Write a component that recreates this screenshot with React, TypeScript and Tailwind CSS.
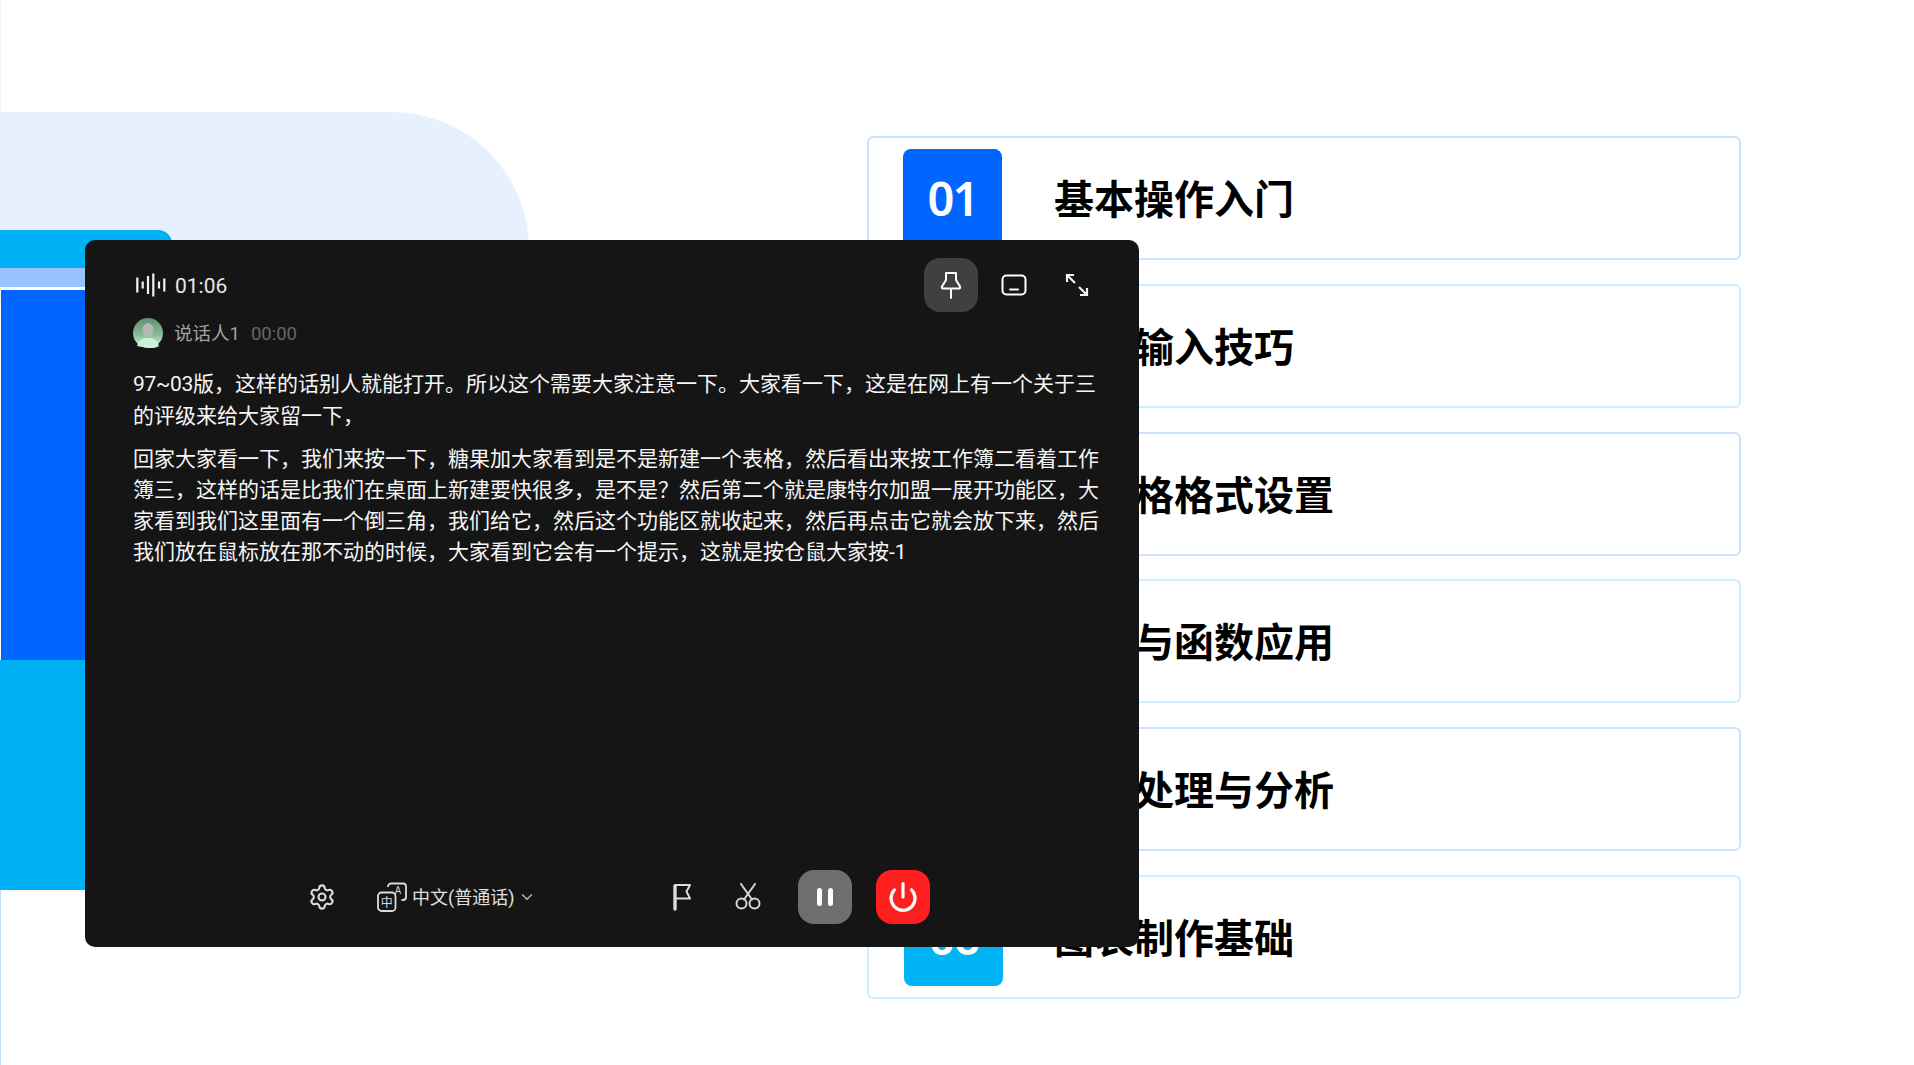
import { Settings, Power, ChevronDown } from "lucide-react";

const cards = [
  { n: "01", t: "基本操作入门", cyan: false },
  { n: "02", t: "数据输入技巧", cyan: true },
  { n: "03", t: "单元格格式设置", cyan: false },
  { n: "04", t: "公式与函数应用", cyan: true },
  { n: "05", t: "数据处理与分析", cyan: false },
  { n: "06", t: "图表制作基础", cyan: true },
];

const para2 = [
  "回家大家看一下，我们来按一下，糖果加大家看到是不是新建一个表格，然后看出来按工作簿二看着工作",
  "簿三，这样的话是比我们在桌面上新建要快很多，是不是？然后第二个就是康特尔加盟一展开功能区，大",
  "家看到我们这里面有一个倒三角，我们给它，然后这个功能区就收起来，然后再点击它就会放下来，然后",
  "我们放在鼠标放在那不动的时候，大家看到它会有一个提示，这就是按仓鼠大家按-1",
];

function Wave() {
  return (
    <svg width="32" height="24" viewBox="0 0 32 24" fill="none" stroke="#f2f2f2" strokeWidth="2.2">
      <path d="M2.3 4.5v15M7.7 8.5v7M13 3v18M18.3 .5v23M24 8.5v7M29.3 5.5v13" />
    </svg>
  );
}

function Pin() {
  return (
    <svg width="22" height="28" viewBox="0 0 22 28" fill="none" stroke="#fff" strokeWidth="2" strokeLinejoin="round" strokeLinecap="round">
      <path d="M6 2h10v7l4 6.5q.6 2-1 2H3q-1.6 0-1-2L6 9z" />
      <path d="M11 18v9" />
    </svg>
  );
}

function MiniWindow() {
  return (
    <svg width="26" height="22" viewBox="0 0 26 22" fill="none" stroke="#fff" strokeWidth="2" strokeLinecap="round">
      <rect x="1.5" y="1.5" width="23" height="19" rx="4" />
      <path d="M9 15.5h8" />
    </svg>
  );
}

function Expand() {
  return (
    <svg width="24" height="24" viewBox="0 0 24 24" fill="none" stroke="#f2f2f2" strokeWidth="2.2">
      <path d="M2 9V2h7M2 2l8 8M22 15v7h-7M22 22l-8-8" />
    </svg>
  );
}

function TranslateIcon() {
  return (
    <svg width="30" height="30" viewBox="0 0 30 30" fill="none" stroke="#dcdcdc" strokeWidth="1.8">
      <path d="M11 5q0-3.5 3.5-3.5H26q3 0 3 3V15q0 3-3 3h-1.5" />
      <rect x="1" y="10.5" width="17.5" height="18.5" rx="3.5" fill="#151515" />
      <text x="9.7" y="24.5" fontSize="12" textAnchor="middle" fill="#dcdcdc" stroke="none" fontFamily="'Noto Sans CJK SC', sans-serif">中</text>
      <text x="21" y="12" fontSize="10" textAnchor="middle" fill="#dcdcdc" stroke="none" fontFamily="Roboto, sans-serif">A</text>
    </svg>
  );
}

function Flag() {
  return (
    <svg width="20" height="28" viewBox="0 0 20 28" fill="none" stroke="#dcdcdc" strokeLinecap="round" strokeLinejoin="round">
      <path d="M3 3v23" strokeWidth="3.4" />
      <path d="M3 2h15l-3.5 6.5 3.5 7H3" strokeWidth="2" />
    </svg>
  );
}

function Scissors() {
  return (
    <svg width="26" height="28" viewBox="0 0 26 28" fill="none" stroke="#d6d6d6" strokeWidth="2" strokeLinecap="round">
      <circle cx="6.5" cy="20.5" r="5" />
      <circle cx="19.5" cy="20.5" r="5" />
      <path d="M9 16.5 20 1M17 16.5 6 1" />
    </svg>
  );
}

function Avatar() {
  return (
    <svg width="30" height="30" viewBox="0 0 30 30">
      <defs>
        <linearGradient id="ag" x1="0" y1="0" x2="0" y2="1">
          <stop offset="0" stopColor="#5f8f72" />
          <stop offset="0.55" stopColor="#86bb98" />
          <stop offset="1" stopColor="#d3f5dc" />
        </linearGradient>
      </defs>
      <circle cx="15" cy="15" r="15" fill="url(#ag)" />
      <ellipse cx="15" cy="12" rx="5.5" ry="7" fill="#b4b9b4" />
      <path d="M4 28q2-7 8-8h6q6 1 8 8q-5 3-11 2t-11-2z" fill="#cdf2d7" />
    </svg>
  );
}

export default function App() {
  return (
    <div className="relative flex h-[1065px] w-[1914px] overflow-hidden bg-white [font-family:Roboto,'Noto_Sans_CJK_SC',sans-serif]">
      <div className="flex h-full w-[529px] shrink-0 flex-col">
        <div className="h-[112px] border-l border-[#f3f6fb]" />
        <div className="h-[175px] rounded-tr-[137px] bg-[#e6f0ff] pt-[118px]">
          <div className="h-[38px] w-[172px] rounded-tr-[14px] bg-[#00b0f5]" />
          <div className="h-[19px] w-[172px] bg-[#99c2ff]" />
        </div>
        <div className="h-[373px] w-[172px] border-t-[3px] border-l-[1.5px] border-white bg-[#0066ff]" />
        <div className="h-[230px] w-[172px] bg-[#00b0f5]" />
        <div className="flex-1 border-l border-[#c4dcff]" />
      </div>

      <div className="ml-[338px] flex w-[874px] flex-col gap-[23.8px] pt-[136px]">
        {cards.map((c) => (
          <div
            key={c.n}
            className={`flex h-[124px] items-center rounded-[6px] border-2 bg-white ${c.cyan ? "border-[#ccf0ff]" : "border-[#cce0ff]"}`}
          >
            <div
              className={`flex h-[99px] w-[99px] items-center justify-center rounded-[8px] text-[47px] font-semibold tracking-[-2px] text-white [font-family:'Noto_Sans',sans-serif] ${c.cyan ? "ml-[35px] bg-[#00b4f5]" : "ml-[34px] bg-[#0066ff]"}`}
            >
              {c.n}
            </div>
            <div className={`-mt-[2px] text-[40px] font-bold leading-none text-black [font-family:'Noto_Sans_CJK_SC',sans-serif] ${c.cyan ? "ml-[51px]" : "ml-[52px]"}`}>
              {c.t}
            </div>
          </div>
        ))}
      </div>

      <div className="absolute top-[240px] left-[85px] flex h-[707px] w-[1054px] flex-col rounded-[10px] bg-[#151515] px-[48px] pb-[23px]">
        <div className="flex h-[72px] justify-between pt-[18px]">
          <div className="flex h-[54px] items-center gap-[8px] pl-[2px] text-[21px] text-[#e8e8e8]">
            <Wave />
            <span className="pt-[3px]">01:06</span>
          </div>
          <div className="mr-[2px] flex h-[54px] items-center">
            <div className="flex h-[54px] w-[54px] items-center justify-center rounded-[16px] bg-[#404040]">
              <Pin />
            </div>
            <div className="ml-[23px] flex w-[26px] justify-center">
              <MiniWindow />
            </div>
            <div className="ml-[38px]">
              <Expand />
            </div>
          </div>
        </div>

        <div className="flex h-[42px] items-center text-[18.5px]">
          <Avatar />
          <span className="ml-[11px] pt-[3px] text-[#a3a3a3]">说话人1</span>
          <span className="ml-[11px] pt-[3px] text-[#666666]">00:00</span>
        </div>

        <div className="mt-[15px] text-[21px] leading-[31.5px] whitespace-nowrap text-[#f5f5f5]">
          <div>
            <span className="tracking-[-0.3px]">97~03</span>版，这样的话别人就能打开。所以这个需要大家注意一下。大家看一下，这是在网上有一个关于三
          </div>
          <div>的评级来给大家留一下，</div>
        </div>
        <div className="mt-[11.5px] text-[21px] leading-[31.2px] whitespace-nowrap text-[#f5f5f5]">
          {para2.map((l) => (
            <div key={l}>{l}</div>
          ))}
        </div>

        <div className="mt-auto -ml-[48px] flex h-[54px] items-center pl-[223px]">
          <Settings size={28} strokeWidth={1.8} color="#dcdcdc" />
          <div className="ml-[41px]">
            <TranslateIcon />
          </div>
          <span className="ml-[5px] text-[18px] text-[#e0e0e0]">中文(普通话)</span>
          <ChevronDown size={18} strokeWidth={2} color="#b0b0b0" className="ml-[4px]" />
          <div className="ml-[136px]">
            <Flag />
          </div>
          <div className="ml-[43px]">
            <Scissors />
          </div>
          <div className="ml-[37px] flex h-[54px] w-[54px] items-center justify-center gap-[6px] rounded-[16px] bg-[#6e6e6e]">
            <span className="h-[18px] w-[5px] rounded-full bg-white" />
            <span className="h-[18px] w-[5px] rounded-full bg-white" />
          </div>
          <div className="ml-[24px] flex h-[54px] w-[54px] items-center justify-center rounded-[16px] bg-[#ff1f1f]">
            <Power size={32} strokeWidth={2.4} color="#fff" />
          </div>
        </div>
      </div>
    </div>
  );
}
